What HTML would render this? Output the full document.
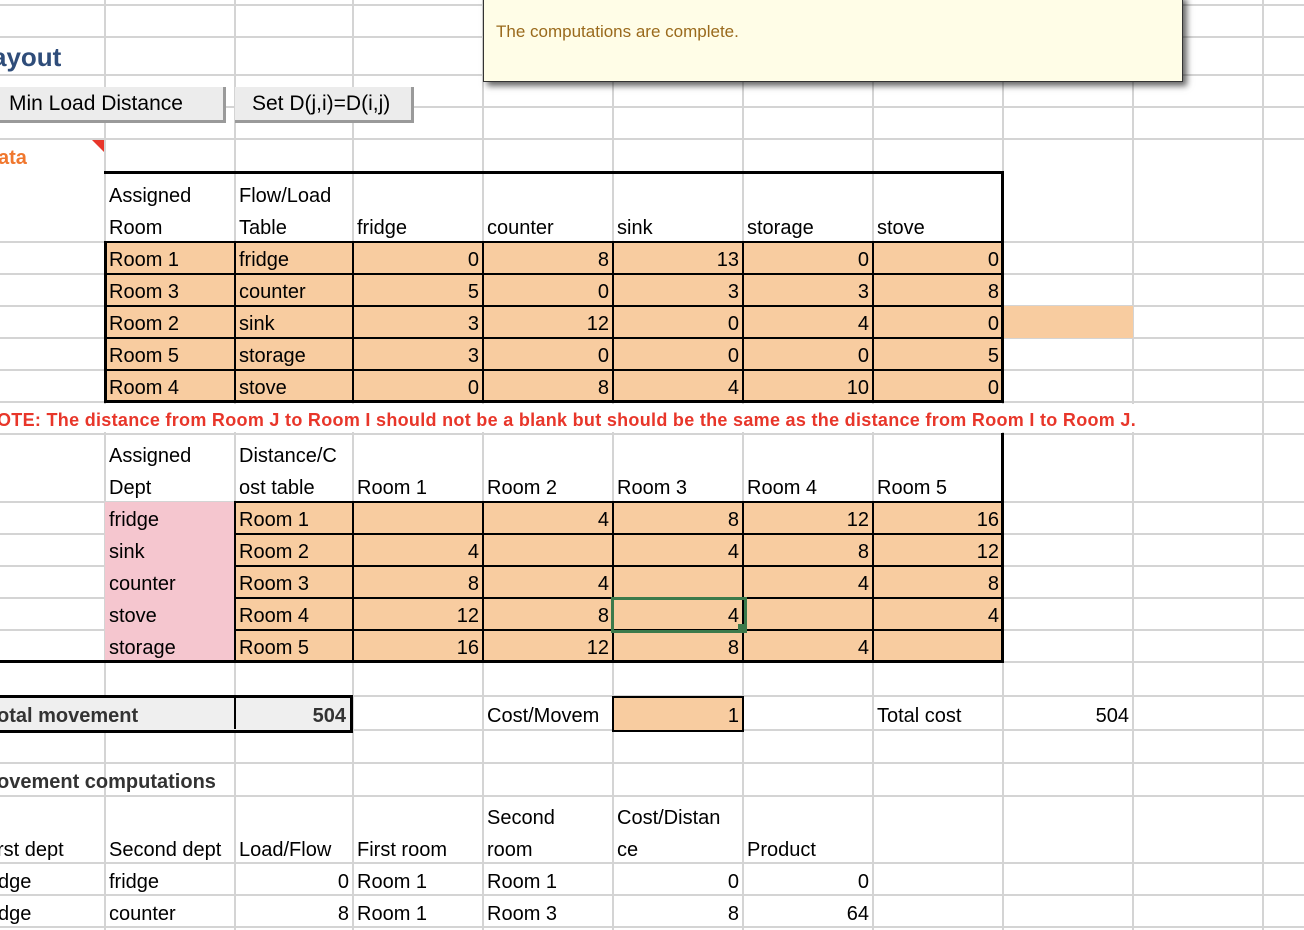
<!DOCTYPE html>
<html><head><meta charset="utf-8"><style>
body{margin:0;width:1304px;height:930px;overflow:hidden;background:#fff;position:relative;font-family:"Liberation Sans",sans-serif;font-size:20px;color:#000}
.v{position:absolute;top:0;height:930px;width:2px;background:#d4d4d4}
.h{position:absolute;left:0;width:1304px;height:2px;background:#d4d4d4}
.f{position:absolute}
.t{position:absolute;white-space:nowrap;line-height:32px;height:32px;padding:2px 4px 0 4px;box-sizing:border-box;overflow:hidden}
.r{text-align:right}
.b{position:absolute;background:#000}
</style></head><body>
<div class="v" style="left:104px"></div><div class="v" style="left:234px"></div><div class="v" style="left:352px"></div><div class="v" style="left:482px"></div><div class="v" style="left:612px"></div><div class="v" style="left:742px"></div><div class="v" style="left:872px"></div><div class="v" style="left:1002px"></div><div class="v" style="left:1132px"></div><div class="v" style="left:1262px"></div>
<div class="h" style="top:4px"></div><div class="h" style="top:36px"></div><div class="h" style="top:74px"></div><div class="h" style="top:106px"></div><div class="h" style="top:138px"></div><div class="h" style="top:241px"></div><div class="h" style="top:273px"></div><div class="h" style="top:305px"></div><div class="h" style="top:337px"></div><div class="h" style="top:369px"></div><div class="h" style="top:401px"></div><div class="h" style="top:433px"></div><div class="h" style="top:501px"></div><div class="h" style="top:533px"></div><div class="h" style="top:565px"></div><div class="h" style="top:597px"></div><div class="h" style="top:629px"></div><div class="h" style="top:661px"></div><div class="h" style="top:695px"></div><div class="h" style="top:729px"></div><div class="h" style="top:762px"></div><div class="h" style="top:795px"></div><div class="h" style="top:862px"></div><div class="h" style="top:894px"></div><div class="h" style="top:926px"></div>

<div class="f" style="left:105px;top:242px;width:898px;height:160px;background:#f8cca0"></div>
<div class="f" style="left:1003px;top:306px;width:130px;height:32px;background:#f8cca0"></div>
<div class="f" style="left:235px;top:502px;width:768px;height:160px;background:#f8cca0"></div>
<div class="f" style="left:105px;top:502px;width:130px;height:160px;background:#f5c6cf"></div>
<div class="f" style="left:613px;top:697px;width:130px;height:33px;background:#f8cca0"></div>
<div class="f" style="left:0;top:697px;width:352px;height:33px;background:#efefef"></div>
<div class="f" style="left:0;top:404px;width:1140px;height:28px;background:#fff"></div>
<div class="f" style="left:0;top:140px;width:104px;height:31px;background:#fff"></div>

<div class="b" style="left:104px;top:171px;width:900px;height:3px"></div>
<div class="b" style="left:1001px;top:171px;width:3px;height:232px"></div>
<div class="b" style="left:104px;top:400px;width:900px;height:3px"></div>
<div class="b" style="left:104px;top:241px;width:3px;height:161px"></div>
<div class="b" style="left:104px;top:241px;width:898px;height:2px"></div>
<div class="b" style="left:105px;top:273px;width:897px;height:2px"></div>
<div class="b" style="left:105px;top:305px;width:897px;height:2px"></div>
<div class="b" style="left:105px;top:337px;width:897px;height:2px"></div>
<div class="b" style="left:105px;top:369px;width:897px;height:2px"></div>
<div class="b" style="left:234px;top:242px;width:2px;height:160px"></div>
<div class="b" style="left:352px;top:242px;width:2px;height:160px"></div>
<div class="b" style="left:482px;top:242px;width:2px;height:160px"></div>
<div class="b" style="left:612px;top:242px;width:2px;height:160px"></div>
<div class="b" style="left:742px;top:242px;width:2px;height:160px"></div>
<div class="b" style="left:872px;top:242px;width:2px;height:160px"></div>

<div class="b" style="left:1001px;top:433px;width:3px;height:230px"></div>
<div class="b" style="left:0;top:660px;width:1004px;height:3px"></div>
<div class="b" style="left:234px;top:501px;width:768px;height:2px"></div>
<div class="b" style="left:235px;top:533px;width:767px;height:2px"></div>
<div class="b" style="left:235px;top:565px;width:767px;height:2px"></div>
<div class="b" style="left:235px;top:597px;width:767px;height:2px"></div>
<div class="b" style="left:235px;top:629px;width:767px;height:2px"></div>
<div class="b" style="left:234px;top:502px;width:2px;height:160px"></div>
<div class="b" style="left:352px;top:502px;width:2px;height:160px"></div>
<div class="b" style="left:482px;top:502px;width:2px;height:160px"></div>
<div class="b" style="left:612px;top:502px;width:2px;height:160px"></div>
<div class="b" style="left:742px;top:502px;width:2px;height:160px"></div>
<div class="b" style="left:872px;top:502px;width:2px;height:160px"></div>
<div class="f" style="left:611px;top:597px;width:130px;height:30px;border:3px solid #3c7a4b"></div>
<div class="f" style="left:738px;top:624px;width:8px;height:8px;background:#3c7a4b"></div>

<div class="f" style="left:0;top:695px;width:350px;height:32px;border:3px solid #000;border-left:none"></div>
<div class="b" style="left:234px;top:697px;width:2px;height:32px"></div>
<div class="f" style="left:612px;top:696px;box-sizing:border-box;width:132px;height:36px;border:2px solid #000"></div>

<div class="f" style="left:483px;top:-5px;width:698px;height:85px;background:#fffde7;border:1.5px solid #333;box-shadow:4px 4px 6px rgba(0,0,0,0.6)"></div>
<div class="t" style="left:496px;top:16px;font-size:17px;color:#9a6a1c;padding:0">The computations are complete.</div>

<div class="t" style="left:-8px;top:40px;font-size:26px;font-weight:bold;color:#2f4d7a;line-height:34px;height:36px;padding:0">ayout</div>
<div class="f" style="left:0;top:87px;width:223px;height:33px;background:#ececec;border-right:3px solid #9a9a9a;border-bottom:3px solid #9a9a9a"></div>
<div class="t" style="left:9px;top:88px;padding:0;font-size:21px">Min Load Distance</div>
<div class="f" style="left:235px;top:87px;width:176px;height:33px;background:#ececec;border-right:3px solid #9a9a9a;border-bottom:3px solid #9a9a9a"></div>
<div class="t" style="left:252px;top:88px;padding:0;font-size:21px">Set D(j,i)=D(i,j)</div>
<div class="t" style="left:-2px;top:142px;font-weight:bold;color:#f0772e;padding:0">ata</div>
<div class="f" style="left:92px;top:140px;width:0;height:0;border-top:12px solid #e8362a;border-left:12px solid transparent"></div>

<div class="t" style="left:105px;top:178px">Assigned</div><div class="t" style="left:105px;top:210px">Room</div>
<div class="t" style="left:235px;top:178px">Flow/Load</div><div class="t" style="left:235px;top:210px">Table</div>
<div class="t" style="left:353px;top:210px">fridge</div><div class="t" style="left:483px;top:210px">counter</div><div class="t" style="left:613px;top:210px">sink</div><div class="t" style="left:743px;top:210px">storage</div><div class="t" style="left:873px;top:210px">stove</div>
<div class="t" style="left:105px;top:242px">Room 1</div><div class="t" style="left:235px;top:242px">fridge</div>
<div class="t r" style="left:353px;width:130px;top:242px">0</div><div class="t r" style="left:483px;width:130px;top:242px">8</div><div class="t r" style="left:613px;width:130px;top:242px">13</div><div class="t r" style="left:743px;width:130px;top:242px">0</div><div class="t r" style="left:873px;width:130px;top:242px">0</div>
<div class="t" style="left:105px;top:274px">Room 3</div><div class="t" style="left:235px;top:274px">counter</div>
<div class="t r" style="left:353px;width:130px;top:274px">5</div><div class="t r" style="left:483px;width:130px;top:274px">0</div><div class="t r" style="left:613px;width:130px;top:274px">3</div><div class="t r" style="left:743px;width:130px;top:274px">3</div><div class="t r" style="left:873px;width:130px;top:274px">8</div>
<div class="t" style="left:105px;top:306px">Room 2</div><div class="t" style="left:235px;top:306px">sink</div>
<div class="t r" style="left:353px;width:130px;top:306px">3</div><div class="t r" style="left:483px;width:130px;top:306px">12</div><div class="t r" style="left:613px;width:130px;top:306px">0</div><div class="t r" style="left:743px;width:130px;top:306px">4</div><div class="t r" style="left:873px;width:130px;top:306px">0</div>
<div class="t" style="left:105px;top:338px">Room 5</div><div class="t" style="left:235px;top:338px">storage</div>
<div class="t r" style="left:353px;width:130px;top:338px">3</div><div class="t r" style="left:483px;width:130px;top:338px">0</div><div class="t r" style="left:613px;width:130px;top:338px">0</div><div class="t r" style="left:743px;width:130px;top:338px">0</div><div class="t r" style="left:873px;width:130px;top:338px">5</div>
<div class="t" style="left:105px;top:370px">Room 4</div><div class="t" style="left:235px;top:370px">stove</div>
<div class="t r" style="left:353px;width:130px;top:370px">0</div><div class="t r" style="left:483px;width:130px;top:370px">8</div><div class="t r" style="left:613px;width:130px;top:370px">4</div><div class="t r" style="left:743px;width:130px;top:370px">10</div><div class="t r" style="left:873px;width:130px;top:370px">0</div>

<div class="t" style="left:-3px;top:402px;padding:2px 0 0 0;font-size:18px;font-weight:bold;color:#e8362a;letter-spacing:0.3px;overflow:visible">OTE: The distance from Room J to Room I should not be a blank but should be the same as the distance from Room I to Room J.</div>

<div class="t" style="left:105px;top:438px">Assigned</div><div class="t" style="left:105px;top:470px">Dept</div>
<div class="t" style="left:235px;top:438px">Distance/C</div><div class="t" style="left:235px;top:470px">ost table</div>
<div class="t" style="left:353px;top:470px">Room 1</div><div class="t" style="left:483px;top:470px">Room 2</div><div class="t" style="left:613px;top:470px">Room 3</div><div class="t" style="left:743px;top:470px">Room 4</div><div class="t" style="left:873px;top:470px">Room 5</div>
<div class="t" style="left:105px;top:502px">fridge</div><div class="t" style="left:235px;top:502px">Room 1</div>
<div class="t r" style="left:483px;width:130px;top:502px">4</div><div class="t r" style="left:613px;width:130px;top:502px">8</div><div class="t r" style="left:743px;width:130px;top:502px">12</div><div class="t r" style="left:873px;width:130px;top:502px">16</div>
<div class="t" style="left:105px;top:534px">sink</div><div class="t" style="left:235px;top:534px">Room 2</div>
<div class="t r" style="left:353px;width:130px;top:534px">4</div><div class="t r" style="left:613px;width:130px;top:534px">4</div><div class="t r" style="left:743px;width:130px;top:534px">8</div><div class="t r" style="left:873px;width:130px;top:534px">12</div>
<div class="t" style="left:105px;top:566px">counter</div><div class="t" style="left:235px;top:566px">Room 3</div>
<div class="t r" style="left:353px;width:130px;top:566px">8</div><div class="t r" style="left:483px;width:130px;top:566px">4</div><div class="t r" style="left:743px;width:130px;top:566px">4</div><div class="t r" style="left:873px;width:130px;top:566px">8</div>
<div class="t" style="left:105px;top:598px">stove</div><div class="t" style="left:235px;top:598px">Room 4</div>
<div class="t r" style="left:353px;width:130px;top:598px">12</div><div class="t r" style="left:483px;width:130px;top:598px">8</div><div class="t r" style="left:613px;width:130px;top:598px">4</div><div class="t r" style="left:873px;width:130px;top:598px">4</div>
<div class="t" style="left:105px;top:630px">storage</div><div class="t" style="left:235px;top:630px">Room 5</div>
<div class="t r" style="left:353px;width:130px;top:630px">16</div><div class="t r" style="left:483px;width:130px;top:630px">12</div><div class="t r" style="left:613px;width:130px;top:630px">8</div><div class="t r" style="left:743px;width:130px;top:630px">4</div>

<div class="t" style="left:-3px;top:698px;padding:2px 0 0 0;font-weight:bold;color:#333">otal movement</div>
<div class="t r" style="left:235px;width:115px;top:698px;font-weight:bold;color:#333">504</div>
<div class="t" style="left:483px;width:130px;top:698px">Cost/Movem</div>
<div class="t r" style="left:613px;width:130px;top:698px">1</div>
<div class="t" style="left:873px;top:698px">Total cost</div>
<div class="t r" style="left:1003px;width:130px;top:698px">504</div>

<div class="t" style="left:-3px;top:764px;padding:2px 0 0 0;font-weight:bold;color:#333">ovement computations</div>

<div class="t" style="left:483px;top:800px">Second</div><div class="t" style="left:613px;top:800px">Cost/Distan</div>
<div class="t" style="left:-3px;top:832px;padding:2px 0 0 0">rst dept</div><div class="t" style="left:105px;top:832px">Second dept</div><div class="t" style="left:235px;top:832px">Load/Flow</div><div class="t" style="left:353px;top:832px">First room</div><div class="t" style="left:483px;top:832px">room</div><div class="t" style="left:613px;top:832px">ce</div><div class="t" style="left:743px;top:832px">Product</div>
<div class="t" style="left:-2px;top:864px;padding:2px 0 0 0">dge</div><div class="t" style="left:105px;top:864px">fridge</div><div class="t r" style="left:235px;width:118px;top:864px">0</div><div class="t" style="left:353px;top:864px">Room 1</div><div class="t" style="left:483px;top:864px">Room 1</div><div class="t r" style="left:613px;width:130px;top:864px">0</div><div class="t r" style="left:743px;width:130px;top:864px">0</div>
<div class="t" style="left:-2px;top:896px;padding:2px 0 0 0">dge</div><div class="t" style="left:105px;top:896px">counter</div><div class="t r" style="left:235px;width:118px;top:896px">8</div><div class="t" style="left:353px;top:896px">Room 1</div><div class="t" style="left:483px;top:896px">Room 3</div><div class="t r" style="left:613px;width:130px;top:896px">8</div><div class="t r" style="left:743px;width:130px;top:896px">64</div>
</body></html>
